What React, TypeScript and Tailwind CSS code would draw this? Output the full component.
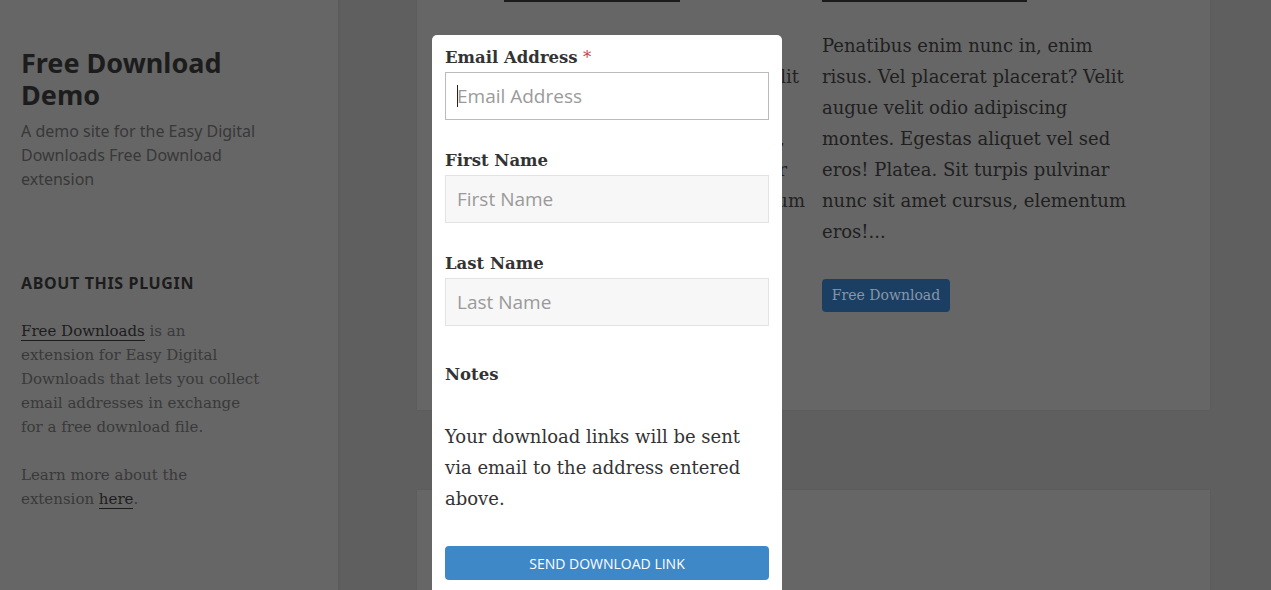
import React from 'react';

const serif = "font-['DejaVu_Serif',serif]";
const sans = "font-['Noto_Sans',sans-serif]";

const leftLines = [
    { text: 'Dolor sit amet', pr: 'pr-[60px]' },
    { text: 'ac augue? Placerat velit', pr: 'pr-[6px]' },
    { text: 'tincidunt nec vel', pr: 'pr-[40px]' },
    { text: 'porta mauris magna,', pr: 'pr-[20px]' },
    { text: 'sit tempor, non tortor', pr: 'pr-[18px]' },
    { text: 'et duis ut elementum', pr: 'pr-0' },
    { text: 'mus!...', pr: 'pr-[200px]' },
];

function Field({ label, placeholder, required, active }: { label: string; placeholder: string; required?: boolean; active?: boolean }) {
    return (
        <div className="mb-[29px]">
            <label className={`${serif} block text-[16.5px] leading-[24px] font-bold text-[#333] mb-[2px]`}>
                {label}
                {required && <span className="text-[#b94a48] font-normal"> *</span>}
            </label>
            <div
                className={`h-[48px] flex items-center pl-[11px] border ${
                    active ? 'bg-white border-[#bbbbbb]' : 'bg-[#f7f7f7] border-[#e3e3e3]'
                }`}
            >
                {active && <span className="w-px h-[22px] bg-[#222] mr-[-1px]" />}
                <input
                    className="font-['Open_Sans',sans-serif] text-[19px] bg-transparent outline-none w-full placeholder:text-[#9a9a9a]"
                    placeholder={placeholder}
                />
            </div>
        </div>
    );
}

export default function App() {
    return (
        <div className="relative w-[1271px] h-[590px] overflow-hidden flex bg-[#5f5f5f]">
            {/* sidebar */}
            <aside className="w-[338px] shrink-0 bg-[#666] shadow-[1px_0_2px_rgba(0,0,0,0.08)] pl-[21px] pt-[47px]">
                <h1 className={`${sans} text-[27px] leading-[32px] font-bold text-[#1c1c1c]`}>
                    Free Download
                    <br />
                    Demo
                </h1>
                <p className={`${sans} text-[16px] leading-[24px] text-[#383838] mt-[8px] w-[250px]`}>
                    A demo site for the Easy Digital Downloads Free Download extension
                </p>
                <h2 className={`${sans} text-[16px] leading-[24px] font-bold tracking-[0.04em] text-[#1c1c1c] mt-[80px]`}>
                    ABOUT THIS PLUGIN
                </h2>
                <div className={`${serif} text-[15px] leading-[24px] text-[#393939] mt-[24px]`}>
                    <p className="mb-[24px]">
                        <a className="text-[#1c1c1c] border-b border-[#1c1c1c]">Free Downloads</a> is an
                        <br />
                        extension for Easy Digital
                        <br />
                        Downloads that lets you collect
                        <br />
                        email addresses in exchange
                        <br />
                        for a free download file.
                    </p>
                    <p>
                        Learn more about the
                        <br />
                        extension <a className="text-[#1c1c1c] border-b border-[#1c1c1c]">here</a>.
                    </p>
                </div>
            </aside>

            {/* main column */}
            <main className="flex-1 pl-[79px]">
                <article className="w-[793px] h-[410px] bg-[#666] shadow-[0_0_1px_rgba(0,0,0,0.15)] pl-[87px] flex gap-[17px]">
                    <div className="w-[301px]">
                        <div className="w-[176px] h-[2px] bg-[#1a1a1a]" />
                        <div className={`${serif} text-[18px] leading-[31px] text-[#222] mt-[28px]`}>
                            {leftLines.map((l, i) => (
                                <div key={i} className={`text-right whitespace-nowrap ${l.pr}`}>
                                    {l.text}
                                </div>
                            ))}
                        </div>
                    </div>
                    <div className="w-[310px]">
                        <div className="w-[205px] h-[2px] bg-[#1a1a1a]" />
                        <p className={`${serif} text-[18px] leading-[31px] text-[#1f1f1f] mt-[28px]`}>
                            Penatibus enim nunc in, enim risus. Vel placerat placerat? Velit augue velit odio adipiscing
                            montes. Egestas aliquet vel sed eros! Platea. Sit turpis pulvinar nunc sit amet cursus,
                            elementum eros!...
                        </p>
                        <button
                            className={`${serif} mt-[32px] w-[128px] h-[33px] rounded-[4px] bg-[#1b3f62] text-[#8797a8] text-[14px]`}
                        >
                            Free Download
                        </button>
                    </div>
                </article>
                <article className="w-[793px] h-[200px] mt-[80px] bg-[#666] shadow-[0_0_1px_rgba(0,0,0,0.15)]" />
            </main>

            {/* modal */}
            <div className="absolute left-[432px] top-[35px] w-[350px] h-[600px] bg-white rounded-[5px] px-[13px] pt-[11px]">
                <Field label="Email Address" placeholder="Email Address" required active />
                <Field label="First Name" placeholder="First Name" />
                <Field label="Last Name" placeholder="Last Name" />
                <h3 className={`${serif} text-[16.5px] leading-[24px] font-bold text-[#333] mt-[37px]`}>Notes</h3>
                <p className={`${serif} text-[18px] leading-[31px] text-[#333] mt-[34px]`}>
                    Your download links will be sent via email to the address entered above.
                </p>
                <button className="mt-[32px] w-full h-[34px] rounded-[4px] bg-[#3f88c8] text-white font-['Open_Sans',sans-serif] text-[14px] uppercase">
                    Send Download Link
                </button>
            </div>
        </div>
    );
}
